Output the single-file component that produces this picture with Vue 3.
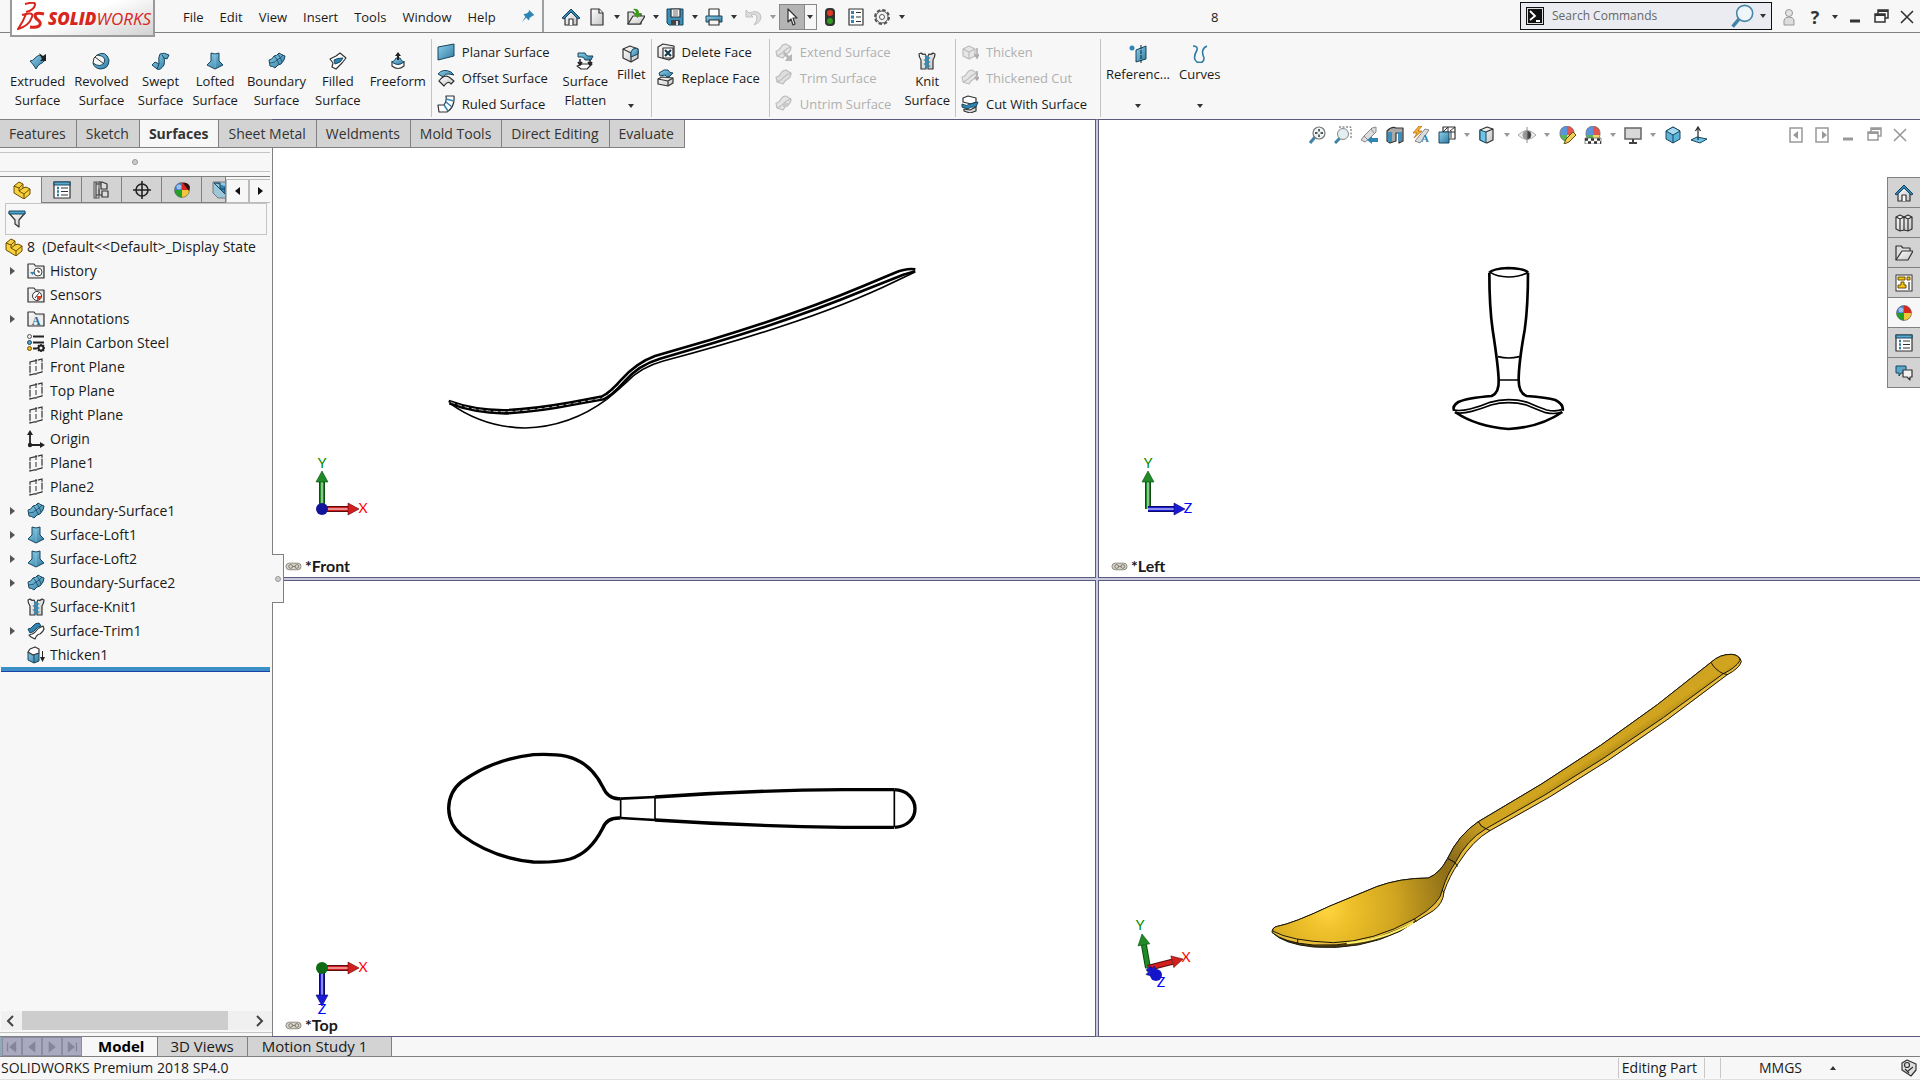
<template>
  <div class="app">
    <svg class="defs" width="0" height="0" aria-hidden="true">
      <defs>
        <linearGradient id="blue" x1="0" y1="0" x2="1" y2="1">
          <stop offset="0" stop-color="#8fd0ea" />
          <stop offset="1" stop-color="#2f7ba3" />
        </linearGradient>
        <linearGradient id="grey" x1="0" y1="0" x2="1" y2="1">
          <stop offset="0" stop-color="#ffffff" />
          <stop offset="1" stop-color="#c4c4c4" />
        </linearGradient>
        <radialGradient id="bowl" gradientUnits="userSpaceOnUse" cx="230" cy="805" r="370">
          <stop offset="0" stop-color="#ffd640" />
          <stop offset="0.2" stop-color="#eec02a" />
          <stop offset="0.55" stop-color="#d2a620" />
          <stop offset="1" stop-color="#8f7018" />
        </radialGradient>
        <linearGradient id="handle" gradientUnits="userSpaceOnUse" x1="1030" y1="320" x2="1062" y2="368">
          <stop offset="0" stop-color="#cfa221" />
          <stop offset="0.4" stop-color="#d2a51f" />
          <stop offset="1" stop-color="#a88417" />
        </linearGradient>
        <linearGradient id="neck" gradientUnits="userSpaceOnUse" x1="690" y1="550" x2="590" y2="680">
          <stop offset="0" stop-color="#c99d20" />
          <stop offset="1" stop-color="#80641a" />
        </linearGradient>
      </defs>
    </svg>

    <header class="titlebar">
      <div class="logo">
        <svg class="logo-mark" viewBox="0 0 28 28" aria-hidden="true">
          <path d="M8 2 Q19 -1 18 3 Q17 8 9 10" fill="none" stroke="#d8251d" stroke-width="2" />
          <path d="M5 13 Q17 9 15 15 Q12 24 1 27 Q6 20 9 12" fill="none" stroke="#d8251d" stroke-width="2" />
          <path d="M27 12 Q19 10 18 13 Q18 16 21 18 Q25 21 22 24 Q19 26 13 25" fill="none" stroke="#d8251d" stroke-width="3" />
        </svg>
        <span class="logo-text"><b>SOLID</b>WORKS</span>
      </div>
      <nav class="menu">
        <button v-for="m in menus" :key="m">{{ m }}</button>
      </nav>
      <button class="pin" aria-label="Pin menu"><Glyph name="pin" /></button>
      <div class="quick">
        <div class="quick-group">
          <template v-for="q in quickFiles" :key="q.icon">
            <button :aria-label="q.icon"><Glyph :name="q.icon" /></button>
            <i v-if="q.caret" class="caret" :class="{ dim: q.dim }"></i>
          </template>
        </div>
        <div class="select-box">
          <button class="select-on" aria-label="Select"><Glyph name="cursor" /></button>
          <button class="select-more" aria-label="Selection options"><i class="caret"></i></button>
        </div>
        <div class="quick-group">
          <button aria-label="Rebuild"><Glyph name="traffic" /></button>
          <button aria-label="File properties"><Glyph name="props" /></button>
          <button aria-label="Options"><Glyph name="gear" /></button>
          <i class="caret"></i>
        </div>
      </div>
      <div class="doc-title">8</div>
      <label class="search">
        <Glyph name="prompt" />
        <input type="text" placeholder="Search Commands" aria-label="Search Commands" />
        <Glyph class="lens" name="lens" />
        <i class="caret"></i>
      </label>
      <div class="window-tools">
        <button aria-label="Login"><Glyph name="person" /></button>
        <button class="help" aria-label="Help">?</button>
        <i class="caret"></i>
        <button aria-label="Minimize"><Glyph name="min" /></button>
        <button aria-label="Restore"><Glyph name="restore" /></button>
        <button aria-label="Close"><Glyph name="close" /></button>
      </div>
    </header>

    <section class="ribbon">
      <div v-for="(group, gi) in ribbon" :key="gi" class="group">
        <div v-if="group.small" class="stack">
          <button v-for="s in group.small" :key="s.label" class="small" :disabled="s.off">
            <Glyph :name="s.icon" /><span>{{ s.label }}</span>
          </button>
        </div>
        <button v-for="b in group.big" :key="b.lines[0]" class="big" :class="{ drop: b.drop }">
          <Glyph :name="b.icon" />
          <span v-for="l in b.lines" :key="l">{{ l }}</span>
          <i v-if="b.drop" class="caret"></i>
        </button>
      </div>
    </section>

    <main class="workspace">
      <nav class="tabs">
        <button v-for="t in tabs" :key="t" :class="{ active: t === 'Surfaces' }">{{ t }}</button>
      </nav>

      <aside class="panel">
        <div class="panel-grip"><i class="dot"></i></div>
        <div class="manager">
          <button v-for="(m, i) in managers" :key="m" :class="{ active: i === 0 }" :aria-label="m"><Glyph :name="m" /></button>
          <button class="scroll" aria-label="Previous"><i class="tri left"></i></button>
          <button class="scroll" aria-label="Next"><i class="tri"></i></button>
        </div>
        <label class="filter"><Glyph name="funnel" /><input type="text" aria-label="Filter" /></label>
        <div class="root"><Glyph name="part" /><span>8&nbsp; (Default&lt;&lt;Default&gt;_Display State</span></div>
        <ul class="tree">
          <li v-for="n in tree" :key="n.label">
            <span class="twist"><i v-if="n.open" class="tri grey"></i></span>
            <Glyph :name="n.icon" />
            <span>{{ n.label }}</span>
          </li>
        </ul>
        <div class="rollback"></div>
        <div class="hscroll">
          <button aria-label="Scroll left"><Glyph name="chevLeft" /></button>
          <div class="track"><div class="thumb"></div></div>
          <button aria-label="Scroll right"><Glyph name="chevRight" /></button>
        </div>
        <div class="panel-foot"></div>
        <button class="handle" aria-label="Collapse panel"><i class="dot"></i></button>
      </aside>

      <div class="views">
        <section class="view">
          <svg class="canvas" viewBox="273 120 822 457">
            <g class="wire" transform="translate(430 250) scale(0.33333)">
              <path d="M56 453 Q130 480 220 481 Q300 479 420 458 L515 440 Q540 428 575 388 Q620 338 675 318 L840 270 Q1100 192 1300 108 L1395 68 Q1430 54 1456 58" />
              <path d="M58 460 Q130 488 225 490 Q320 486 440 462 L520 448 Q545 438 583 395 Q625 345 690 326 L850 279 Q1100 205 1310 118 L1420 74 L1456 64" />
              <path class="fine" d="M530 448 Q560 424 588 398 Q630 352 700 333 Q900 280 1050 230 Q1250 165 1400 92 L1455 66" />
              <path class="fine" d="M60 460 Q160 532 285 534 Q420 530 530 448" />
              <path class="broken" d="M62 456 Q130 484 222 485 Q310 482 430 460 L517 444 Q543 433 579 391" />
            </g>
          </svg>
          <Triad :axes="triads.front" />
          <div class="view-name"><Glyph name="link" />*Front</div>
        </section>

        <section class="view">
          <svg class="canvas" viewBox="1099 120 821 457">
            <g class="wire" transform="translate(1430 240) scale(0.33333)">
              <path d="M178 98 Q178 200 188 270 Q205 380 206 420 Q208 458 185 468 Q110 474 85 486 Q66 498 72 512" />
              <path d="M294 98 Q294 200 284 270 Q266 370 266 420 Q266 460 290 468 Q350 472 376 480 Q402 494 398 512" />
              <path d="M178 98 Q188 86 235 84 Q288 86 294 98" />
              <path class="fine" d="M182 98 Q200 110 235 111 Q270 110 292 98" />
              <path class="fine" d="M204 350 Q236 358 268 350 M206 420 H266" />
              <path class="fine" d="M72 510 Q90 514 120 507 Q150 500 180 487 Q205 479 236 479 Q267 479 292 487 Q320 500 350 510 Q380 516 398 508" />
              <path class="fine" d="M76 518 Q95 522 125 514 Q155 506 183 495 Q208 488 236 488 Q264 488 289 495 Q317 507 347 518 Q377 524 396 516" />
              <path d="M75 516 Q140 560 236 567 Q330 562 397 516" />
            </g>
          </svg>
          <div class="headsup">
            <template v-for="h in headsUp" :key="h.icon">
              <button :aria-label="h.icon"><Glyph :name="h.icon" /></button>
              <i v-if="h.caret" class="caret dim"></i>
            </template>
          </div>
          <div class="doc-buttons">
            <button v-for="d in docButtons" :key="d" :aria-label="d"><Glyph :name="d" /></button>
          </div>
          <div class="taskpane">
            <button v-for="t in taskPane" :key="t" :class="{ active: t === 'sphere' }" :aria-label="t"><Glyph :name="t" /></button>
          </div>
          <Triad :axes="triads.left" />
          <div class="view-name"><Glyph name="link" />*Left</div>
        </section>

        <section class="view">
          <svg class="canvas" viewBox="273 581 822 455">
            <g class="wire" transform="translate(430 730) scale(0.33333)">
              <path class="bold" d="M572 206 Q535 210 518 170 Q480 95 410 79 Q370 71 310 74 Q190 87 95 155 Q57 185 56 235 Q57 285 95 315 Q190 385 310 396 Q370 399 420 387 Q480 370 518 295 Q530 262 572 264" />
              <path class="bold" d="M675 201 Q950 181 1240 179 H1393 M675 270 Q950 288 1240 292 H1393" />
              <path d="M572 206 L675 201 M572 264 L675 270" />
              <path class="bold" d="M1393 179 C1430 180 1455 205 1455 236 S1430 290 1395 292" />
              <path class="fine" d="M572 206 V264 M675 202 V270 M1393 180 V292" />
            </g>
          </svg>
          <Triad :axes="triads.top" />
          <div class="view-name"><Glyph name="link" />*Top</div>
        </section>

        <section class="view">
          <svg class="canvas" viewBox="1099 581 821 455">
            <g transform="translate(1250 640) scale(0.33333)" stroke="#1a1608" stroke-width="3" fill="none" stroke-linejoin="round">
              <path d="M66 877 Q100 912 190 921 Q330 932 450 874 L500 842 Z" fill="#4d3d0d" />
              <path fill="#e8bd3c" d="M685 545 Q1070 326 1383 67 Q1410 42 1445 43 Q1470 45 1474 65 Q1468 85 1432 104 Q1076 382 720 572 Q670 600 625 670 Q600 705 582 755 Q580 790 550 812 Q500 846 450 866 Q330 922 190 915 Q100 908 66 877 Q66 862 82 859 Q130 850 240 798 L380 740 Q450 714 535 714 Q570 700 593 655 Q625 585 685 545 Z" />
              <path fill="url(#bowl)" d="M68 873 Q68 862 82 859 Q130 850 240 798 L380 740 Q450 714 535 714 Q570 700 593 655 L616 668 Q590 705 577 750 Q572 790 495 836 Q370 905 250 908 Q120 903 68 873 Z" />
              <path fill="url(#neck)" d="M593 655 Q625 585 685 545 Q692 560 708 566 Q650 600 616 668 Z" />
              <path fill="url(#handle)" d="M685 545 Q1070 326 1383 67 Q1410 42 1445 43 Q1468 45 1470 62 Q1455 85 1420 101 Q1060 374 708 566 Q692 560 685 545 Z" />
              <path d="M1383 67 Q1395 90 1420 101 L1434 104 M708 566 L720 572 M616 668 L622 680 M577 750 L582 758 M493 836 L498 846 M143 897 V910" />
              <path d="M290 910 Q400 900 490 848" stroke="#ffee6a" stroke-width="6" />
            </g>
          </svg>
          <Triad :axes="triads.iso" />
        </section>
      </div>
    </main>

    <nav class="sheets">
      <div class="sheet-nav">
        <button v-for="s in ['navFirst', 'navPrev', 'navNext', 'navLast']" :key="s" :aria-label="s"><Glyph :name="s" /></button>
      </div>
      <button class="sheet active">Model</button>
      <button class="sheet">3D Views</button>
      <button class="sheet wide">Motion Study 1</button>
    </nav>

    <footer class="status">
      <span class="product">SOLIDWORKS Premium 2018 SP4.0</span>
      <span class="cell editing">Editing Part</span>
      <span class="cell units">MMGS<i class="caret up"></i></span>
      <Glyph name="tag" />
    </footer>
  </div>
</template>

<script setup>
import { h } from 'vue'

const S = 'stroke="#333" stroke-width="1.2" stroke-linejoin="round"'
const B = 'stroke="#17455e" stroke-width="1" stroke-linejoin="round"'
const L = 'stroke="#bdbdbd" stroke-width="1.2" stroke-linejoin="round"'
const ball = (y) => `<circle cx="9" cy="${y}" r="7.5" fill="#e8e8e8"/><path d="M9 ${y}V${y - 7.5}A7.5 7.5 0 0 0 1.5 ${y}Z" fill="#3d7fd6"/><path d="M9 ${y}V${y - 7.5}A7.5 7.5 0 0 1 16.5 ${y}Z" fill="#d9281e"/><path d="M9 ${y}H1.5A7.5 7.5 0 0 0 9 ${y + 7.5}Z" fill="#23a02a"/><path d="M9 ${y}H16.5A7.5 7.5 0 0 1 9 ${y + 7.5}Z" fill="#f0c63c"/><circle cx="6" cy="${y - 3}" r="2.5" fill="#fff" opacity=".5"/><circle cx="9" cy="${y}" r="7.5" fill="none" stroke="#555" stroke-width=".6"/>`
const egg = '<path d="M9 0Q1 1 2 9H9Z" fill="#5b93dd"/><path d="M9 0Q17 1 16 9H9Z" fill="#e2564c"/><path d="M2 9Q3 14 9 16V9Z" fill="#58b45a"/><path d="M16 9Q15 14 9 16V9Z" fill="#f2d36a"/><path d="M9 0Q1 1 2 9Q3 14 9 16Q15 14 16 9Q17 1 9 0Z" fill="none" stroke="#666" stroke-width=".7"/>'
const folder = `<path d="M1 16V2H7L8.5 4H17V16Z" fill="url(#grey)" ${S}/><path d="M2 6H16V15H2Z" fill="#eee"/>`
const loft = `<path d="M5 1Q9 3 13 1V9L17 13L9 17L1 13L5 9Z" fill="url(#blue)" ${B}/><path d="M9 2V16" stroke="#fff" stroke-width=".6" opacity=".4"/>`
const boundary = `<path d="M1 8Q4 8 6 4Q9 4 11 1Q14 3 17 4Q17 8 13 12Q10 12 7 16Q5 14 2 14Z" fill="url(#blue)" ${B}/><path d="M2 11Q7 11 9 8Q12 7 15 3M6 4Q9 6 11 12M10 2Q13 6 14 10" fill="none" stroke="#17455e" stroke-width=".8"/>`
const knit = `<path d="M3 1Q5 3 7 2L8 4L8 17H3V8Q1 5 1 2Z M15 1Q13 3 11 2L10 4V17H15V8Q17 5 17 2Z" fill="url(#grey)" ${S}/><path d="M7 4L11 6L7 8L11 10L7 12L11 14L7 16" fill="none" stroke="#2f8ab5" stroke-width="1.6"/>`
const wave = (f, st) => `<path d="M1 8Q4 8 6 4Q8 1 11 1Q14 3 16 4Q16 8 13 10Q10 11 8 15Q5 14 2 13Z" fill="${f}" ${st}/><path d="M2 13Q7 11 9 8Q12 5 16 4" fill="none" ${st}/>`
const box = (f, st) => `<path d="M2 6L8 3L14 6V13L8 16L2 13Z" fill="${f}" ${st}/><path d="M2 6L8 9L14 6M8 9V16" fill="none" ${st}/>`
const list = `<rect x="1" y="1" width="16" height="16" fill="#fff" ${S}/><rect x="1" y="1" width="16" height="3" fill="#5aa9cc" stroke="#17455e"/><path d="M4 7H6M4 10.5H6M4 14H6" stroke="#2f7ba3" stroke-width="2.5"/><path d="M8 7H15M8 10.5H15M8 14H15" stroke="#333"/>`
const plane = '<path d="M3 4L15 1V14L3 17Z" fill="none" stroke="#333" stroke-width="1.2" stroke-dasharray="7 1"/><path d="M9 1V17" stroke="#333" stroke-dasharray="5 2"/>'
const rects = '<path d="M6 6V2H16V10H13M3 6H13V14H3Z" fill="none" stroke="currentColor" stroke-width="1.5"/><path d="M3 7H13M6 3H16" stroke="currentColor" stroke-width="2"/>'
const navBox = (d) => `<path d="${d}" fill="#85859a" stroke="#85859a" stroke-width="1.5"/>`

const icons = {
  pin: '<path d="M10 2L16 8L14 9L11 11L10 14L7 11L2 16L6 10L4 7L8 6L10 4Z" fill="#2f86b5"/>',
  home: `<path d="M3 9V17H15V9L9 3Z" fill="url(#grey)" ${S}/><path d="M0 10L9 1L18 10L16 11L9 4L2 11Z" fill="#2f86b5" ${B}/><path d="M7 17V11H11V17" fill="#fff" ${S}/>`,
  new: `<path d="M3 1H11L15 5V17H3Z" fill="url(#grey)" ${S}/><path d="M11 1V5H15" fill="#fff" ${S}/>`,
  open: `<path d="M1 16V4H6L8 6H14V16Z" fill="#ddd" ${S}/><path d="M1 16L6 8H18L13 16Z" fill="url(#grey)" ${S}/><path d="M6 1Q12 0 12 5H15L10.5 10L6 5H9Q9 3 6 1Z" fill="#3c9a1c"/>`,
  save: `<path d="M1 1H17V17H3L1 15Z" fill="#3b8fb8" ${B}/><rect x="5" y="1" width="9" height="8" fill="#f5f5f5" ${S}/><path d="M7 3H12M7 5H12M7 7H12" stroke="#777"/><path d="M5 12H14V17H5Z" fill="#444"/><rect x="10" y="13" width="2" height="4" fill="#ddd"/>`,
  print: `<path d="M4 8V1H14V8" fill="#fff" ${S}/><path d="M1 8H17V14H1Z" fill="url(#blue)" ${B}/><path d="M4 12H14V17H4Z" fill="#f5f5f5" ${S}/>`,
  undo: '<path d="M2 2V9H9L7 7Q13 5 13 10Q13 13 10 17Q17 14 17 9Q16 1 5 5Z" fill="#ddd" stroke="#c0c0c0"/>',
  cursor: `<path d="M5 1V14L8 11L10 17L12 16L10 10H14Z" fill="#fff" ${S}/>`,
  traffic: '<rect x="4" y="0" width="10" height="18" rx="4" fill="#333"/><circle cx="9" cy="5" r="3" fill="#e33a1f"/><circle cx="9" cy="13" r="3" fill="#2f9b1f"/>',
  props: `<rect x="2" y="1" width="14" height="16" fill="#fff" ${S}/><path d="M4 4.5H7M4 9H7M4 13.5H7" stroke="#2f86b5" stroke-width="3"/><path d="M9 4.5H14M9 9H14M9 13.5H14" stroke="#333"/>`,
  gear: '<circle cx="9" cy="9" r="7" fill="#eee" stroke="#555" stroke-width="2" stroke-dasharray="3.5 2"/><circle cx="9" cy="9" r="6" fill="#f2f2f2" stroke="#555"/><circle cx="9" cy="9" r="2.5" fill="#fff" stroke="#555"/>',
  prompt: '<rect x="0" y="0" width="18" height="18" fill="#111"/><rect x="1.5" y="1.5" width="15" height="15" fill="none" stroke="#ddd"/><path d="M4 4L9 9L4 13M10 14H14" fill="none" stroke="#fff" stroke-width="1.8"/>',
  lens: '<path d="M7 11L2 17" stroke="#3f82a8" stroke-width="2.5"/><circle cx="11" cy="7" r="6" fill="#eef6fa" stroke="#4b86a8" stroke-width="1.2"/>',
  person: '<circle cx="9" cy="5" r="3.5" fill="#e4e4e4" stroke="#999"/><path d="M4 17V12Q5 9 9 9Q13 9 14 12V17Z" fill="#ddd" stroke="#999"/>',
  min: '<path d="M4 13H14" stroke="currentColor" stroke-width="3"/>',
  restore: rects,
  close: '<path d="M3 3L15 15M15 3L3 15" stroke="currentColor" stroke-width="1.6"/>',

  extruded: `<path d="M1 9Q4 9 6 6Q8 4 11 3L16 8Q14 11 11 12Q9 13 7 17Q5 13 1 9Z" fill="url(#blue)" ${B}/><path d="M10 1L14 4L17 2V9H11L13 7Z" fill="#222"/>`,
  revolved: `<path d="M5 3Q14 -2 17 8Q17 17 8 17Q2 16 1 11Q8 16 12 11Q15 4 5 3Z" fill="url(#blue)" ${B}/><path d="M5 3Q1 5 1 11M3 5L12 12" fill="none" stroke="#333"/>`,
  swept: `<path d="M8 2Q12 0 17 3L15 7L12 6Q13 9 12 13Q8 19 5 17L0 13L3 10L7 12Q6 5 8 2Z" fill="url(#blue)" ${B}/><path d="M10 3L12 6M7 12L5 17" fill="none" ${B}/>`,
  lofted: loft,
  boundary,
  filled: `<path d="M1 7L7 4L11 1L17 6L13 11L7 17L3 15L4 11Z" fill="#fff" ${S}/><path d="M5 8Q8 6 14 6Q12 11 6 12Z" fill="#2f86b5" ${B}/>`,
  freeform: `<path d="M3 9V14Q9 19 15 14V9" fill="#fff" ${S}/><path d="M3 10Q6 9 7 6H11Q12 9 15 10Q9 15 3 10Z" fill="url(#blue)" ${B}/><path d="M8 8V4H6L9 0L12 4H10V8" fill="#222"/>`,
  planar: `<path d="M1 4L17 1V13L1 17Z" fill="url(#blue)" ${B}/>`,
  offset: `<path d="M1 5Q6 -1 14 3L17 6L12 5Q8 4 6 8Z" fill="url(#blue)" ${B}/><path d="M2 12Q7 5 12 8L17 12L14 15Q11 11 7 17Z" fill="url(#grey)" ${S}/>`,
  ruled: `<path d="M1 10H7Q10 7 9 1H17Q18 12 10 17H2Z" fill="#fff" ${S}/><path d="M7 10L11 16M9 7L15 12M9 4L17 6" stroke="#2f86b5" stroke-width="1.5"/>`,
  flatten: `<path d="M2 1H9Q10 4 12 4H17L15 8H9Q8 5 6 5H2Z" fill="url(#blue)" ${B}/><path d="M1 14L6 12H16L11 17H5Z" fill="#fff" ${S}/><path d="M4 7V12M2 10L4 13L6 10M14 8V12M12 10L14 13L16 10" fill="none" stroke="#222" stroke-width="1.5"/>`,
  fillet: `<path d="M1 4L8 1L16 4V13L9 17L1 13Z" fill="url(#grey)" ${S}/><path d="M1 4L9 8V17" fill="none" ${S}/><path d="M9 7Q10 3 15 3Q17 5 16 9L9 12Z" fill="url(#blue)" ${B}/>`,
  deleteFace: `<path d="M1 4L6 1L17 3V14L12 17L1 14Z" fill="url(#grey)" ${S}/><path d="M6 5H16V15H6Z" fill="#fff" ${S}/><path d="M8 7L14 13M14 7L8 13" stroke="#163a4d" stroke-width="2.2"/>`,
  replaceFace: `<path d="M1 10L5 8L16 9V14L11 17L1 15Z" fill="url(#grey)" ${S}/><path d="M1 10L11 12L16 9M11 12V17" fill="none" ${S}/><path d="M2 4L7 1H11Q12 4 16 4L12 8Q9 8 8 6L3 7Z" fill="url(#blue)" ${B}/>`,
  extend: wave('#e6e6e6', L) + '<path d="M9 8L14 13L17 11V18H10L12 15L8 11Z" fill="#b8b8b8"/>',
  trim: wave('#dedede', L),
  untrim: wave('#e6e6e6', L) + '<path d="M8 8H13V12H8Z" fill="#c8c8c8"/>',
  knit,
  thickenOff: box('#e6e6e6', L) + '<path d="M16 5V13M13.5 11L16 15L18 11" fill="none" stroke="#aaa" stroke-width="1.5"/>',
  thickCutOff: wave('#e6e6e6', L) + '<path d="M16 2V10M14 8L16 11L18 8" fill="none" stroke="#aaa" stroke-width="1.5"/>',
  cutWith: `<path d="M2 3L7 1L15 3V7L10 9L2 7Z" fill="#fff" ${S}/><path d="M1 9Q6 12 9 9L17 7L15 12Q9 11 7 14L1 12Z" fill="#2f86b5" ${B}/><path d="M3 14L9 15L15 12V16L9 18L3 16Z" fill="#ddd" ${S}/>`,
  reference: `<circle cx="3" cy="3" r="2.5" fill="#2f86b5"/><path d="M7 5L17 1V14L7 17Z" fill="url(#blue)" ${B}/><path d="M12 0V18" stroke="#123" stroke-dasharray="4 1"/>`,
  curves: '<path d="M2 1Q7 1 6 5Q1 14 6 17Q13 19 13 13Q9 4 16 1" fill="none" stroke="#2f7ba3" stroke-width="1.6"/>',

  part: '<path d="M1 5L6 1L10 3V7L13 6L17 8V13L11 18L1 12Z" fill="#f8cf3c" stroke="#6b4e00" stroke-linejoin="round"/><path d="M1 5L6 7L10 3M6 7V10L11 13L17 8M11 13V18M6 10L10 7" fill="none" stroke="#6b4e00"/>',
  list,
  config: `<path d="M3 1V17M3 3H8M3 14H9M6 8V14" fill="none" stroke="#333"/><path d="M6 1H9L14 3V8H8V1M9 10H15V16H9Z" fill="#ddd" ${S}/><rect x="1" y="1" width="5" height="16" fill="none" stroke="#555"/>`,
  target: '<circle cx="9" cy="9" r="6" fill="none" stroke="#222" stroke-width="1.6"/><path d="M9 0V18M0 9H18" stroke="#222" stroke-width="1.6"/>',
  ball: ball(9) + '<path d="M10 2L16 10L17 6Q15 1 10 2Z" fill="#301010"/>',
  cam: `<path d="M1 1H17V17H6L1 12Z" fill="#9cc7da" stroke="#777"/><path d="M2 2H8V8L13 13V6H17" fill="#2f86b5" ${B}/><path d="M2 2L8 8H13" fill="none" ${B}/>`,
  funnel: `<path d="M1 3H17L11 10V17L7 14V10Z" fill="url(#grey)" ${S}/><path d="M1 1H17V4H1Z" fill="#4ba3cc" ${B}/>`,
  history: folder + '<circle cx="11" cy="10" r="4" fill="#fff" stroke="#444"/><path d="M11 8V10H13" fill="none" stroke="#333"/><path d="M3 10H8L5.5 13Z" fill="#2f86b5"/>',
  sensors: folder + '<circle cx="10" cy="10" r="4.5" fill="#fff" stroke="#333"/><path d="M10 10L14 10A4 4 0 0 1 10 14Z" fill="#e23c1c"/><path d="M8 12L12 7" stroke="#333"/>',
  annotations: folder + '<text x="9" y="15" text-anchor="middle" font-family="Liberation Serif, serif" font-weight="bold" font-size="12" fill="#246b92">A</text>',
  material: '<circle cx="2.5" cy="2.5" r="2" fill="#eee" stroke="#555"/><circle cx="2.5" cy="8.5" r="2" fill="#4aa3cc" stroke="#246"/><circle cx="2.5" cy="14.5" r="2" fill="#f3b81e" stroke="#750"/><path d="M6 2.5H17M6 8.5H17M6 14.5H10" stroke="#222" stroke-width="1.8"/><circle cx="14" cy="14" r="2.5" fill="none" stroke="#222" stroke-width="2"/><path d="M14 10V12M14 16V18M10 14H12M16 14H18M11 11L12 12M17 11L16 12M11 17L12 16M17 17L16 16" stroke="#222" stroke-width="1.5"/>',
  plane,
  origin: '<path d="M3 2V15H16" fill="none" stroke="#222" stroke-width="1.8"/><path d="M3 0L6 5H0ZM18 15L13 12V18Z" fill="#222"/><circle cx="3" cy="15" r="2.2" fill="#222"/>',
  trimOn: `<path d="M1 7Q4 7 6 4Q8 1 12 1L14 4Q10 5 9 7Q7 10 3 11Z" fill="#2f86b5" ${B}/><path d="M2 13Q7 12 9 9Q11 6 16 4L17 7Q16 10 13 12Q10 12 8 17L4 15Z" fill="#fff" ${S}/>`,
  thicken: `<path d="M1 6L6 4L12 7V15L7 17L1 14Z" fill="url(#blue)" ${B}/><path d="M1 6L3 3L8 1L12 3V7L6 9Z" fill="#fff" ${S}/><path d="M7 9V17" ${B}/><path d="M15 5V11H13L15.5 16L18 11H16V5Z" fill="#222"/>`,
  chevLeft: '<path d="M12 4L7 9L12 14" fill="none" stroke="#444" stroke-width="2"/>',
  chevRight: '<path d="M6 4L11 9L6 14" fill="none" stroke="#444" stroke-width="2"/>',

  zoomFit: '<path d="M7 11L2 17" stroke="#3f82a8" stroke-width="3"/><circle cx="11" cy="7" r="6" fill="#eef4f6" stroke="#777" stroke-width="1.2"/><path d="M11 3V11M7 7H15" stroke="#555" stroke-width="1.8" stroke-dasharray="2.5 3"/>',
  zoomArea: '<path d="M5 1H17V13" fill="none" stroke="#555" stroke-dasharray="2 1.5"/><path d="M6 12L1 17" stroke="#3f82a8" stroke-width="3"/><circle cx="9" cy="8" r="5.5" fill="#e3eef3" stroke="#888"/>',
  prevView: '<path d="M1 14L4 10L12 2L16 1V6L9 13L5 16Z" fill="#ddd" stroke="#888"/><path d="M4 10L8 14M11 3L14 7" stroke="#888"/><path d="M7 14L12 10V12H18V16H12V18Z" fill="#2f86b5"/>',
  section: `<path d="M1 5Q6 0 10 2H17V15L13 17V7H10V15L4 17L1 15Z" fill="#aaa" ${S}/><path d="M2 6H6V16H2ZM12 6H16V15H12Z" fill="#3b8fb8"/>`,
  dynamic: '<path d="M3 15L13 3L17 4L8 17Z" fill="#ddd" stroke="#888"/><path d="M7 0L1 7H5L2 12L10 5H6L10 0Z" fill="#f4b02a" stroke="#b06010" stroke-width=".7"/><text x="13" y="16" text-anchor="middle" font-family="Liberation Serif, serif" font-size="11" font-weight="bold" fill="#2f86b5">A</text>',
  orient: `<path d="M5 1H17V13H5Z" fill="#fff" ${S}/><path d="M5 6L10 1M12 5L17 1M10 1V6M5 6H17M13 5V12" stroke="#333"/><rect x="1" y="6" width="10" height="11" fill="url(#blue)" ${B}/>`,
  display: `<path d="M2 4L9 1L15 3V14L9 17L2 14Z" fill="url(#grey)" ${S}/><path d="M2 4L8 6V17L2 14Z" fill="#6ec3e6" ${B}/><path d="M8 6L15 3" ${S}/>`,
  eye: '<path d="M0 9Q9 0 18 9Q9 18 0 9Z" fill="#eee" stroke="#aaa"/><circle cx="9" cy="9" r="4.5" fill="#999"/><path d="M9 5A4 4 0 0 1 9 13Z" fill="#444"/><path d="M9 1V17" stroke="#888"/>',
  appearance: egg + '<path d="M6 18L8 13L15 6L18 9L11 16Z" fill="#f2cf57" stroke="#5f4a10"/>',
  scene: egg + '<path d="M1 12H17V18H1Z" fill="#fff" stroke="#444" stroke-width=".6"/><path d="M1 13.5H17" stroke="#333" stroke-width="2.5" stroke-dasharray="3 3"/><path d="M4 16.5H17" stroke="#333" stroke-width="2.5" stroke-dasharray="3 3"/>',
  monitor: '<rect x="1" y="2" width="16" height="11" fill="#d8d8d8" stroke="#666" stroke-width="1.5"/><path d="M9 13V16M5 17H13" stroke="#444" stroke-width="2"/>',
  cube: `<path d="M2 5L9 1L16 5V13L9 17L2 13Z" fill="#5db4d8" ${B}/><path d="M2 5L9 9L16 5L9 1Z" fill="#a5daef" ${B}/><path d="M9 9V17" ${B}/>`,
  normalTo: `<path d="M1 14L7 11L17 13L10 17Z" fill="#6ec3e6" ${B}/><path d="M8 14V2M5.5 5L8 1L10.5 5" fill="none" stroke="#333" stroke-width="1.3"/>`,
  dockLeft: '<rect x="3" y="2" width="12" height="14" fill="none" stroke="currentColor" stroke-width="1.5"/><path d="M11 5V13L6 9Z" fill="currentColor"/>',
  dockRight: '<rect x="3" y="2" width="12" height="14" fill="none" stroke="currentColor" stroke-width="1.5"/><path d="M9 5V13L14 9Z" fill="currentColor"/>',
  library: `<path d="M1 3L5 1L9 3L13 1L17 3V15L13 17L9 16L5 17L1 15Z" fill="url(#grey)" ${S}/><path d="M5 5V17M9 3V16M13 5V17M1 3L5 5L9 3L13 5L17 3" fill="none" ${S}/>`,
  folderOpen: `<path d="M1 16V2H6L8 4H15V7" fill="#ddd" ${S}/><path d="M1 16L7 7H18L13 16Z" fill="url(#grey)" ${S}/>`,
  palette: '<rect x="1" y="1" width="16" height="16" fill="#fff" stroke="#333"/><path d="M3 3H10V6H3ZM12 3H15V6H12ZM3 14V11H6V8H9V11H11V14Z" fill="#f5c518" stroke="#6b4e00"/><path d="M14 8V16" stroke="#888" stroke-width="2"/>',
  sphere: ball(9),
  chat: `<path d="M1 2H11V9H6L4 12V9H1Z" fill="#5aa9cc" ${B}/><path d="M8 6H17V13H15V16L12 13H8Z" fill="#f2f2f2" ${S}/>`,
  link: '<rect x="1" y="6" width="16" height="7" rx="3.5" fill="#d8d4c8" stroke="#8a867c"/><circle cx="6" cy="9.5" r="2" fill="none" stroke="#77736a"/><path d="M8 9.5H11" stroke="#77736a"/><circle cx="12.5" cy="9.5" r="2" fill="none" stroke="#77736a"/>',
  tag: `<path d="M2 4L7 1L16 5V11L11 17L2 11Z" fill="#ddd" ${S}/><circle cx="7" cy="6" r="2.5" fill="none" ${S}/><path d="M8 12L13 8M5 10L9 14" ${S}/>`,
  navFirst: navBox('M4 4V14M13 4L7 9L13 14Z'),
  navPrev: navBox('M12 4L6 9L12 14Z'),
  navNext: navBox('M6 4L12 9L6 14Z'),
  navLast: navBox('M5 4L11 9L5 14ZM14 4V14')
}

const Glyph = (props) => h('svg', { class: 'glyph', viewBox: '0 0 18 18', 'aria-hidden': 'true', innerHTML: icons[props.name] })
Glyph.props = ['name']

const dark = { green: '#0c4d10', red: '#5c0a0a', blue: '#0a0a66' }
const fill = { green: '#1f8a26', red: '#d21f1f', blue: '#1a1ad8' }
const label = { green: '#008a00', red: '#f00', blue: '#00f' }

// Each axis runs from the shared origin (20, 60); the label sits past the arrow tip.
const Triad = (props) => {
  const parts = []
  for (const a of props.axes.arms) {
    const len = Math.hypot(a.x, a.y)
    const ux = a.x / len
    const uy = a.y / len
    const bx = 20 + a.x - ux * 11
    const by = 60 + a.y - uy * 11
    parts.push(h('path', { d: `M20 60L${bx} ${by}`, stroke: dark[a.c], 'stroke-width': 6 }))
    parts.push(h('path', { d: `M20 60L${bx} ${by}`, stroke: fill[a.c], 'stroke-width': 4 }))
    if (a.shine) parts.push(h('path', { d: `M20 60L${bx} ${by}`, stroke: '#fff', 'stroke-width': 1 }))
    parts.push(h('path', {
      d: `M${20 + a.x} ${60 + a.y}L${bx - uy * 6} ${by + ux * 6}L${bx + uy * 6} ${by - ux * 6}Z`,
      fill: fill[a.c], stroke: dark[a.c], 'stroke-width': 0.6
    }))
    parts.push(h('text', { x: a.lx, y: a.ly, fill: label[a.c] }, a.t))
  }
  const k = props.axes.knob
  if (k) parts.push(h('circle', { cx: k.x, cy: k.y, r: 6, fill: k.c }))
  return h('svg', { class: 'triad', viewBox: '0 0 70 110', 'aria-hidden': 'true', 'font-family': 'Lato, sans-serif', 'font-size': 14, 'text-anchor': 'middle' }, parts)
}
Triad.props = ['axes']

const triads = {
  front: {
    arms: [
      { x: 0, y: -38, c: 'green', t: 'Y', lx: 20, ly: 19, shine: true },
      { x: 37, y: 0, c: 'red', t: 'X', lx: 61, ly: 64, shine: true }
    ],
    knob: { x: 20, y: 60, c: '#14149a' }
  },
  left: {
    arms: [
      { x: 0, y: -38, c: 'green', t: 'Y', lx: 20, ly: 19, shine: true },
      { x: 37, y: 0, c: 'blue', t: 'Z', lx: 60, ly: 64, shine: true }
    ]
  },
  top: {
    arms: [
      { x: 37, y: 0, c: 'red', t: 'X', lx: 61, ly: 64, shine: true },
      { x: 0, y: 38, c: 'blue', t: 'Z', lx: 20, ly: 106, shine: true }
    ],
    knob: { x: 20, y: 60, c: '#0f6a14' }
  },
  iso: {
    arms: [
      { x: -6, y: -34, c: 'green', t: 'Y', lx: 12, ly: 22 },
      { x: 35, y: -9, c: 'red', t: 'X', lx: 58, ly: 54 },
      { x: 10, y: 10, c: 'blue', t: 'Z', lx: 33, ly: 79 }
    ],
    knob: { x: 28, y: 67, c: '#1414c8' }
  }
}

const menus = ['File', 'Edit', 'View', 'Insert', 'Tools', 'Window', 'Help']
const quickFiles = [
  { icon: 'home' },
  { icon: 'new', caret: true },
  { icon: 'open', caret: true },
  { icon: 'save', caret: true },
  { icon: 'print', caret: true },
  { icon: 'undo', caret: true, dim: true }
]

const ribbon = [
  {
    big: [
      { icon: 'extruded', lines: ['Extruded', 'Surface'] },
      { icon: 'revolved', lines: ['Revolved', 'Surface'] },
      { icon: 'swept', lines: ['Swept', 'Surface'] },
      { icon: 'lofted', lines: ['Lofted', 'Surface'] },
      { icon: 'boundary', lines: ['Boundary', 'Surface'] },
      { icon: 'filled', lines: ['Filled', 'Surface'] },
      { icon: 'freeform', lines: ['Freeform'] }
    ]
  },
  {
    small: [
      { icon: 'planar', label: 'Planar Surface' },
      { icon: 'offset', label: 'Offset Surface' },
      { icon: 'ruled', label: 'Ruled Surface' }
    ],
    big: [
      { icon: 'flatten', lines: ['Surface', 'Flatten'] },
      { icon: 'fillet', lines: ['Fillet'], drop: true }
    ]
  },
  {
    small: [
      { icon: 'deleteFace', label: 'Delete Face' },
      { icon: 'replaceFace', label: 'Replace Face' }
    ]
  },
  {
    small: [
      { icon: 'extend', label: 'Extend Surface', off: true },
      { icon: 'trim', label: 'Trim Surface', off: true },
      { icon: 'untrim', label: 'Untrim Surface', off: true }
    ],
    big: [{ icon: 'knit', lines: ['Knit', 'Surface'] }]
  },
  {
    small: [
      { icon: 'thickenOff', label: 'Thicken', off: true },
      { icon: 'thickCutOff', label: 'Thickened Cut', off: true },
      { icon: 'cutWith', label: 'Cut With Surface' }
    ]
  },
  {
    big: [
      { icon: 'reference', lines: ['Referenc...'], drop: true },
      { icon: 'curves', lines: ['Curves'], drop: true }
    ]
  }
]

const tabs = ['Features', 'Sketch', 'Surfaces', 'Sheet Metal', 'Weldments', 'Mold Tools', 'Direct Editing', 'Evaluate']
const managers = ['part', 'list', 'config', 'target', 'ball', 'cam']

const tree = [
  { label: 'History', icon: 'history', open: true },
  { label: 'Sensors', icon: 'sensors' },
  { label: 'Annotations', icon: 'annotations', open: true },
  { label: 'Plain Carbon Steel', icon: 'material' },
  { label: 'Front Plane', icon: 'plane' },
  { label: 'Top Plane', icon: 'plane' },
  { label: 'Right Plane', icon: 'plane' },
  { label: 'Origin', icon: 'origin' },
  { label: 'Plane1', icon: 'plane' },
  { label: 'Plane2', icon: 'plane' },
  { label: 'Boundary-Surface1', icon: 'boundary', open: true },
  { label: 'Surface-Loft1', icon: 'lofted', open: true },
  { label: 'Surface-Loft2', icon: 'lofted', open: true },
  { label: 'Boundary-Surface2', icon: 'boundary', open: true },
  { label: 'Surface-Knit1', icon: 'knit' },
  { label: 'Surface-Trim1', icon: 'trimOn', open: true },
  { label: 'Thicken1', icon: 'thicken' }
]

const headsUp = [
  { icon: 'zoomFit' },
  { icon: 'zoomArea' },
  { icon: 'prevView' },
  { icon: 'section' },
  { icon: 'dynamic' },
  { icon: 'orient', caret: true },
  { icon: 'display', caret: true },
  { icon: 'eye', caret: true },
  { icon: 'appearance' },
  { icon: 'scene', caret: true },
  { icon: 'monitor', caret: true },
  { icon: 'cube' },
  { icon: 'normalTo' }
]
const docButtons = ['dockLeft', 'dockRight', 'min', 'restore', 'close']
const taskPane = ['home', 'library', 'folderOpen', 'palette', 'sphere', 'list', 'chat']
</script>

<style>
body {
  margin: 0;
}
</style>

<style scoped>
.app {
  display: flex;
  flex-direction: column;
  min-height: 100vh;
  font-family: 'Open Sans', 'Noto Sans', sans-serif;
  font-size: 14px;
  line-height: 20px;
  color: #1a1a1a;
  background: #f7f7f7;
}

.defs {
  position: absolute;
}

.app button,
.app input {
  margin: 0;
  padding: 0;
  border: 0;
  border-radius: 0;
  background: none;
  color: inherit;
  font: inherit;
  box-sizing: border-box;
}

.glyph {
  display: block;
  flex: none;
  width: 18px;
  height: 18px;
}

.caret {
  flex: none;
  width: 0;
  border: 3px solid transparent;
  border-top: 4px solid #333;
  border-bottom: 0;
}

.caret.dim {
  border-top-color: #999;
}

.caret.up {
  border-top: 0;
  border-bottom: 4px solid #333;
}

.tri {
  width: 0;
  height: 0;
  border: 4px solid transparent;
  border-left: 5px solid #111;
  border-right: 0;
}

.tri.left {
  border-left: 0;
  border-right: 5px solid #111;
}

.tri.grey {
  border-left-color: #555;
}

.dot {
  width: 4px;
  height: 4px;
  border: 1px solid #999;
  border-radius: 50%;
  background: #ccc;
}

/* Title bar */
.titlebar {
  display: flex;
  align-items: center;
  height: 32px;
  padding: 0 4px 0 10px;
  border-bottom: 1px solid #808080;
  font-size: 13px;
}

.logo {
  position: relative;
  z-index: 2;
  align-self: flex-start;
  display: flex;
  align-items: center;
  gap: 3px;
  box-sizing: border-box;
  width: 145px;
  height: 37px;
  padding: 0 5px;
  border: 2px solid #9a9a9a;
  border-top: 0;
  background: linear-gradient(160deg, #fff 45%, #d2d2d2);
  color: #d8251d;
}

.logo-mark {
  flex: none;
  align-self: flex-start;
  width: 28px;
  height: 28px;
  margin-top: 2px;
}

.logo-text {
  padding-top: 2px;
  font-size: 17px;
  font-style: italic;
}

.logo-text b {
  font-weight: 800;
}

.menu {
  display: flex;
  gap: 16px;
  margin-left: 28px;
  padding-top: 2px;
}

.app .pin {
  display: flex;
  align-items: center;
  height: 32px;
  margin-left: 24px;
  padding-right: 6px;
  border-right: 2px solid #a0a0a0;
}

.pin .glyph {
  width: 16px;
  height: 16px;
}

.quick {
  display: flex;
  align-items: center;
  gap: 4px;
  margin-left: 18px;
  padding-top: 2px;
}

.quick-group {
  display: flex;
  align-items: center;
  gap: 8px;
}

.quick-group .caret {
  margin-right: -1px;
}

.select-box {
  display: flex;
  box-sizing: border-box;
  width: 38px;
  height: 26px;
  border: 1px solid #888;
}

.app .select-on {
  display: flex;
  align-items: center;
  justify-content: center;
  width: 25px;
  border-right: 1px solid #888;
  background: #b4b4b4;
}

.select-more {
  display: flex;
  flex: 1;
  align-items: center;
  justify-content: center;
}

.doc-title {
  flex: 1;
  padding: 2px 0 0 6px;
  text-align: center;
}

.search {
  display: flex;
  align-items: center;
  box-sizing: border-box;
  width: 252px;
  height: 28px;
  padding: 0 5px;
  border: 1px solid #111;
  background: #eaecf1;
}

.app .search input {
  flex: 1;
  min-width: 0;
  margin-left: 8px;
  outline: 0;
  font-size: 12px;
}

.search input::placeholder {
  color: #666;
  opacity: 1;
}

.search .lens {
  width: 24px;
  height: 24px;
  margin-right: 6px;
}

.window-tools {
  display: flex;
  align-items: center;
  gap: 8px;
  margin-left: 8px;
  padding-top: 2px;
  color: #333;
}

.app .help {
  width: 18px;
  font-size: 18px;
  font-weight: 700;
}

/* Ribbon */
.ribbon {
  display: flex;
  height: 86px;
  border-bottom: 1px solid #808080;
  font-size: 13px;
}

.group {
  display: flex;
  gap: 9px;
  margin: 6px 0 2px;
  padding: 0 5px;
  border-left: 1px solid #c4c4c4;
}

.group:first-child {
  padding: 0 5px 0 10px;
  border-left: 0;
}

.group:nth-child(5) {
  padding-right: 9px;
}

.stack {
  display: flex;
  flex-direction: column;
  margin-right: 4px;
}

.app .small {
  display: flex;
  align-items: center;
  gap: 7px;
  height: 26px;
  white-space: nowrap;
}

.app .small:disabled {
  color: #b0b0b0;
}

.app .big {
  display: flex;
  flex-direction: column;
  align-items: center;
  padding-top: 13px;
  line-height: 19px;
  white-space: nowrap;
}

.big .glyph {
  margin-bottom: 2px;
}

.app .big.drop {
  padding-top: 6px;
}

.big .caret {
  margin-top: 20px;
}

/* Workspace */
.workspace {
  position: relative;
  flex: 1;
  display: flex;
}

.tabs {
  position: absolute;
  top: 0;
  left: 0;
  z-index: 3;
  display: flex;
  height: 27px;
  border-bottom: 1px solid #808080;
  background: #d3d3d3;
}

.app .tabs button {
  padding: 0 10px 0 9px;
  border-right: 1px solid #808080;
  color: #333;
}

.app .tabs .active {
  background: #f7f7f7;
  font-weight: 700;
}

.panel {
  position: relative;
  z-index: 2;
  flex: none;
  display: flex;
  flex-direction: column;
  box-sizing: border-box;
  width: 273px;
  padding-top: 28px;
  border-right: 1px solid #808080;
  background: #f7f7f7;
}

.panel-grip {
  display: flex;
  align-items: center;
  justify-content: center;
  height: 18px;
  margin: 4px 2px 4px 0;
  border-top: 1px solid #c4c4c4;
  border-bottom: 1px solid #c4c4c4;
}

.manager {
  display: flex;
  height: 26px;
  margin-right: 2px;
  border-top: 1px solid #808080;
  overflow: hidden;
}

.app .manager button {
  display: flex;
  flex: none;
  align-items: center;
  justify-content: center;
  width: 40px;
  border-right: 1px solid #808080;
  border-bottom: 1px solid #808080;
  background: #d3d3d3;
}

.app .manager .active {
  width: 42px;
  padding-left: 3px;
  border-bottom: 0;
  background: #f7f7f7;
}

.app .manager button:nth-child(6) {
  justify-content: flex-start;
  width: 24px;
  padding-left: 10px;
  overflow: hidden;
}

.app .manager .scroll {
  width: 23px;
  height: 24px;
  margin-top: 2px;
  border: 1px solid #bbb;
  background: #f7f7f7;
}

.filter {
  display: flex;
  align-items: center;
  height: 30px;
  margin: 0 5px;
  padding-left: 2px;
  border: 1px solid #c4c4c4;
}

.filter input {
  flex: 1;
  min-width: 0;
  outline: 0;
}

.root {
  display: flex;
  align-items: center;
  gap: 4px;
  height: 24px;
  padding-left: 5px;
  overflow: hidden;
  white-space: nowrap;
}

.tree {
  margin: 0;
  padding: 0;
  list-style: none;
}

.tree li {
  display: flex;
  align-items: center;
  gap: 5px;
  height: 24px;
  white-space: nowrap;
}

.twist {
  width: 12px;
  padding-left: 10px;
}

.twist .tri {
  display: block;
}

.rollback {
  height: 4px;
  margin: 0 2px 0 1px;
  border-bottom: 1px solid #1f3fa8;
  background: #3a8fc4;
}

.hscroll {
  display: flex;
  align-items: center;
  height: 19px;
  margin: auto 0 2px 1px;
  background: #f0f0f0;
}

.hscroll button {
  width: 21px;
}

.track {
  flex: 1;
  height: 19px;
}

.thumb {
  width: 90%;
  height: 100%;
  background: #cdcdcd;
}

.panel-foot {
  height: 3px;
  border-top: 1px solid #c4c4c4;
}

.app .handle {
  position: absolute;
  top: calc(50% - 24px);
  left: 272px;
  display: flex;
  align-items: center;
  justify-content: center;
  width: 12px;
  height: 49px;
  border: 1px solid #808080;
  border-left: 0;
  background: #f7f7f7;
}

.views {
  flex: 1;
  display: grid;
  grid-template-columns: 822fr 821fr;
  grid-template-rows: 457fr 455fr;
  gap: 4px;
  background: #cacade;
}

.view {
  position: relative;
  background: #fff;
  box-shadow: 0 0 0 1px #5b5b80;
}

.canvas {
  position: absolute;
  inset: 0;
  width: 100%;
  height: 100%;
}

.wire {
  fill: none;
  stroke: #000;
  stroke-width: 8;
}

.wire .fine {
  stroke-width: 5;
}

.wire .bold {
  stroke-width: 10;
}

.wire .broken {
  stroke: #fff;
  stroke-width: 2;
  stroke-dasharray: 14 8;
}

.triad {
  position: absolute;
  left: 29px;
  bottom: 18px;
  width: 70px;
  height: 110px;
  fill: none;
}

.view-name {
  position: absolute;
  left: 12px;
  bottom: 2px;
  display: flex;
  align-items: center;
  gap: 3px;
  font-family: Lato, sans-serif;
  font-size: 16px;
  font-weight: 700;
  line-height: 18px;
}

.view-name .glyph {
  width: 17px;
}

.headsup,
.doc-buttons {
  position: absolute;
  top: 6px;
  display: flex;
  align-items: center;
  gap: 8px;
}

.headsup {
  right: 212px;
}

.doc-buttons {
  right: 11px;
  color: #999;
}

.taskpane {
  position: absolute;
  top: 57px;
  right: 0;
  width: 32px;
  border: 1px solid #808080;
  border-width: 1px 0 0 1px;
}

.app .taskpane button {
  display: flex;
  align-items: center;
  justify-content: center;
  width: 32px;
  height: 30px;
  border-bottom: 1px solid #808080;
  background: #d3d3d3;
}

.app .taskpane .active {
  background: #f7f7f7;
}

/* Sheet tabs and status bar */
.sheets {
  display: flex;
  height: 19px;
  border-top: 1px solid #808080;
  border-bottom: 1px solid #808080;
}

.sheet-nav {
  display: flex;
  padding-left: 2px;
  background: #8faab5;
}

.app .sheet-nav button {
  display: flex;
  align-items: center;
  justify-content: center;
  width: 20px;
  border: 1px solid #8c8ca4;
  background: #a9a9c0;
}

.sheet-nav .glyph {
  width: 16px;
  height: 16px;
}

.app .sheet {
  padding: 0 13px 0 12px;
  border-right: 1px solid #808080;
  background: #d3d3d3;
  font-size: 15px;
  line-height: 19px;
}

.app .sheet.active {
  padding: 0 13px 0 16px;
  background: #f7f7f7;
  color: #000;
  font-weight: 700;
}

.app .sheet.wide {
  padding: 0 24px 0 14px;
}

.status {
  display: flex;
  align-items: center;
  height: 22px;
  padding: 0 2px 0 1px;
  border-bottom: 1px solid #e0e0e0;
}

.product {
  flex: 1;
}

.cell {
  display: flex;
  align-items: center;
  border-left: 1px solid #c8c8c8;
}

.editing {
  padding: 0 7px 0 3px;
  border-right: 1px solid #c8c8c8;
}

.units {
  gap: 28px;
  margin-left: 15px;
  padding: 0 64px 0 38px;
}
</style>
